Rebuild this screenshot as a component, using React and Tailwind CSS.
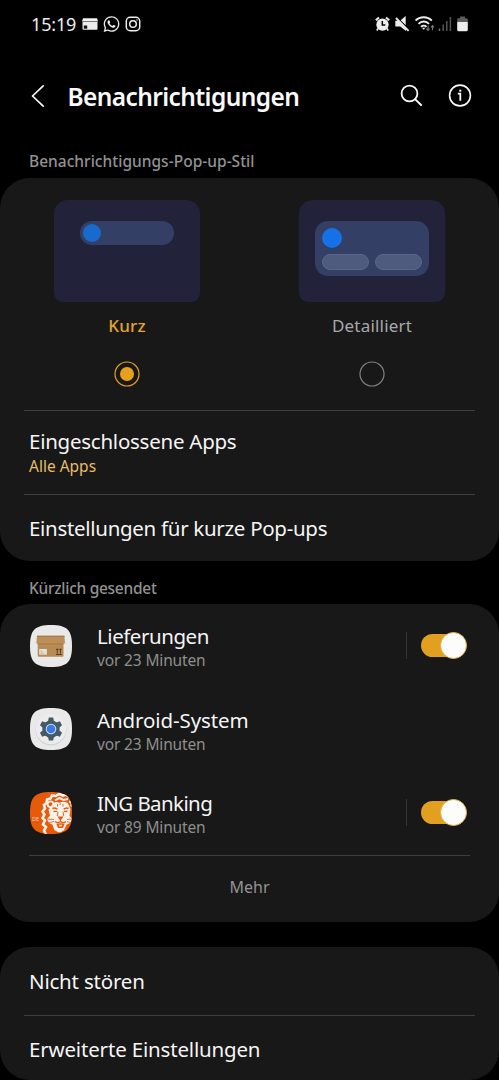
import React from 'react';
import { FaWhatsapp } from 'react-icons/fa';

function StatusBar() {
  return (
    <div className="flex h-12 shrink-0 items-center pl-[31px] pr-[31px] text-[#ededed]">
      <span className="text-[18px] leading-6 tracking-[-0.15px]">15:19</span>
      <svg className="ml-[6px] h-4 w-4" viewBox="0 0 16 16">
        <path d="M1 2.200h14l1 3.200H0z" fill="#f2f2f2" />
        <path d="M.5 6h15v6.800a1 1 0 0 1-1 1h-13a1 1 0 0 1-1-1z" fill="#ededed" />
        <path d="M1.800 9.500h3.400v3.200H1.800z" fill="#111" />
      </svg>
      <FaWhatsapp className="ml-[5px] h-[18px] w-[17px]" />
      <svg className="ml-[5px] h-4 w-4" viewBox="0 0 16 16" fill="none" stroke="currentColor" strokeWidth="1.500">
        <rect x="1.300" y="1.300" width="13.400" height="13.400" rx="3.800" />
        <circle cx="8" cy="8" r="3.300" />
        <circle cx="12" cy="4" r=".3" strokeWidth="1" />
      </svg>
      <div className="flex-1" />
      <svg className="h-4 w-[15px]" viewBox="0 0 15 16" fill="none">
        <path d="M.8 4.300 4 1.500M14.200 4.300 11 1.500" stroke="#ededed" strokeWidth="2" />
        <path d="M3 12.500 1.800 14.500M12 12.500l1.200 2" stroke="#ededed" strokeWidth="1.600" />
        <circle cx="7.500" cy="8.600" r="6.200" fill="#ededed" />
        <path d="M7.300 5v4h3" stroke="#000" strokeWidth="1.500" />
      </svg>
      <svg className="ml-[5px] h-4 w-[15px]" viewBox="0 0 15 16">
        <path d="M.3 4.700h3L11 13v2L5.300 10.500h-5z" fill="#ededed" />
        <path d="M5.300 4.400 10.700 0v9.500z" fill="#ededed" />
        <path d="M2 1.500 14.500 14" stroke="#000" strokeWidth="1.300" />
        <path d="M1 2 13.600 14.800" stroke="#ededed" strokeWidth="1.900" />
      </svg>
      <svg className="ml-[5px] h-4 w-[20px]" viewBox="0 0 20 16" fill="none">
        <path d="M.6 4.600c4.200-4.400 12-4.400 16.200 0M3.500 7.800c2.900-3 7.600-3 10.500 0" stroke="#ededed" strokeWidth="1.900" />
        <path d="M6 10.800c1.600-1.600 4-1.600 5.500 0" stroke="#ededed" strokeWidth="1.700" />
        <path d="m7 11.800 1.700 1.900 1.700-1.900z" fill="#ededed" />
        <path d="M13 9.800v4.500M11.500 12.700l1.500 1.800 1.500-1.800M17.500 14.300V9.500M16 11.300l1.500-1.800 1.500 1.800" stroke="#777" strokeWidth="1.100" />
      </svg>
      <svg className="ml-[3px] h-4 w-[14px]" viewBox="0 0 14 16" fill="none">
        <path d="M1.500 12.500V15" stroke="#777" strokeWidth="1.400" />
        <path d="M5.200 8.500V15M8.800 5V15M12.400 1V15" stroke="#555" strokeWidth="1.500" />
      </svg>
      <svg className="ml-[5px] h-4 w-[11px]" viewBox="0 0 11 16">
        <path d="M3 .6h5v1.700h1.500a1.300 1.300 0 0 1 1.300 1.300V6H.2V3.600a1.300 1.300 0 0 1 1.300-1.300H3z" fill="#5c5c5c" />
        <path d="M.2 6h10.600v7.700a1.500 1.500 0 0 1-1.500 1.500H1.700a1.500 1.500 0 0 1-1.500-1.500z" fill="#ededed" />
      </svg>
    </div>
  );
}

function Header() {
  return (
    <header className="flex h-24 shrink-0 items-center pl-[31px] pr-[27px] text-[#fafafa]">
      <svg className="h-6 w-[14px]" viewBox="0 0 14 24" fill="none" stroke="currentColor" strokeWidth="1.700" strokeLinecap="round" strokeLinejoin="round">
        <path d="M12.200 1.800 1.500 12 12.200 22.200" />
      </svg>
      <h1 className="ml-[22.500px] flex-1 whitespace-nowrap pt-px text-[24.500px] font-semibold leading-8 tracking-[-0.61px]">Benachrichtigungen</h1>
      <svg className="h-6 w-6" viewBox="0 0 24 24" fill="none" stroke="currentColor" strokeWidth="1.800" strokeLinecap="round">
        <circle cx="9.500" cy="9.500" r="7.900" />
        <path d="m15.300 15.400 5.800 5.600" strokeWidth="2" />
      </svg>
      <svg className="ml-6 h-6 w-6" viewBox="0 0 24 24" fill="none" stroke="currentColor" strokeWidth="1.600">
        <circle cx="12" cy="11.500" r="10.400" />
        <path d="M9.800 9.700h2.500v7" strokeWidth="1.800" />
        <path d="M11.300 6.700h2" strokeWidth="2" />
      </svg>
    </header>
  );
}

function Radio({ on }) {
  return (
    <svg className="mt-[23px] h-[26px] w-[26px]" viewBox="0 0 26 26" fill="none">
      <circle cx="13" cy="13" r="12" stroke={on ? '#e0a02b' : '#808080'} strokeWidth="1.200" />
      {on && <circle cx="13" cy="13" r="7" fill="#e6a01c" />}
    </svg>
  );
}

function StyleOption({ label, on, children }) {
  return (
    <div className="flex w-[146px] flex-col items-center">
      <div className="flex h-[102px] w-full flex-col items-center rounded-t-[14px] rounded-b-[9px] bg-[#22233a] pt-[21px]">{children}</div>
      <span className={on ? 'mt-3 text-[17px] font-medium leading-6 tracking-[0.2px] text-[#e4a42b]' : 'mt-3 text-[17px] leading-6 tracking-[0.2px] text-[#a8a8a8]'}>{label}</span>
      <Radio on={on} />
    </div>
  );
}

function Toggle() {
  return (
    <div className="flex items-center">
      <div className="h-[27px] w-px bg-[#343434]" />
      <div className="ml-[14px] flex h-[23px] w-[45px] items-center justify-end rounded-full bg-[#e39f1e]">
        <div className="-mr-px h-[27px] w-[27px] shrink-0 rounded-full border border-[#e3ad49] bg-[#fcfcfa]" />
      </div>
    </div>
  );
}

const SQUIRCLE = 'M21 0C37 0 42 5 42 21S37 42 21 42 0 37 0 21 5 0 21 0Z';

function ParcelIcon() {
  return (
    <svg className="h-[42px] w-[42px]" viewBox="0 0 42 42">
      <path d={SQUIRCLE} fill="#e9e9ea" />
      <path d="M7.700 18h25.800v12.500a1.200 1.200 0 0 1-1.200 1.200H8.900a1.200 1.200 0 0 1-1.200-1.200z" fill="#b88a56" />
      <path d="M7 10.800h27.400l.6 7.700H6.300z" fill="#bd8e59" />
      <path d="M7 10.800h27.400l.1 1.200H6.900z" fill="#a67c4e" />
      <path d="M7.700 18.500h25.800v.9H7.700z" fill="#a37645" />
      <path d="M9.200 24h7.700v5.700H9.200z" fill="#e3e0da" />
      <path d="M10.200 28.200h4M10.200 26.200h2.500" stroke="#aaa" strokeWidth=".7" />
      <path d="M26 29.500h5.800M27.300 28.500v-4.500M30.500 28.500v-4.500M26.300 25l1-1.300 1 1.300M29.500 25l1-1.300 1 1.300" stroke="#4d361f" strokeWidth=".9" fill="none" />
    </svg>
  );
}

function SystemIcon() {
  return (
    <svg className="h-[42px] w-[42px]" viewBox="0 0 42 42">
      <path d={SQUIRCLE} fill="#e9e9ea" />
      <circle cx="21" cy="21.800" r="15.500" fill="#cfcfd1" />
      <circle cx="21" cy="21" r="15.300" fill="#ececee" />
      <g fill="#455a64">
        <circle cx="21" cy="21" r="8.700" />
        <path d="M18.800 9.500h4.400l1 5h-6.400zM18.800 32.500h4.400l1-5h-6.400z" />
        <path d="M18.800 9.500h4.400l1 5h-6.400zM18.800 32.500h4.400l1-5h-6.400z" transform="rotate(60 21 21)" />
        <path d="M18.800 9.500h4.400l1 5h-6.400zM18.800 32.500h4.400l1-5h-6.400z" transform="rotate(120 21 21)" />
      </g>
      <circle cx="21" cy="21" r="5.300" fill="#c9dcf5" />
      <circle cx="21" cy="21" r="4.300" fill="#3b78e7" />
    </svg>
  );
}

function LionIcon() {
  return (
    <svg className="h-[42px] w-[42px]" viewBox="0 0 42 42">
      <clipPath id="tile"><path d={SQUIRCLE} /></clipPath>
      <g clipPath="url(#tile)">
        <path d="M0 0h42v42H0z" fill="#e65a0a" />
        <g fill="none" stroke="#f8f1e9">
          <path d="M40 5.500 36 2.500l-3 1-4-1.500-3 2-4-.5-1.500 3-3.500 1-.5 3.500-2.500 2 1 3.500-2.500 3 2 3-2 3.500 2.500 2.500-2 4 3 2.500-2 3.500 2 4" strokeWidth="2.600" strokeLinejoin="miter" />
          <path d="M25 8.500l4.500-2.500 4 2 4.500-1" strokeWidth="2" />
          <circle cx="20.500" cy="12.300" r="2.900" strokeWidth="1.800" />
          <path d="M39 9.500c2.500 0 3 3 2 5" strokeWidth="1.800" />
        </g>
        <path d="M23 11.500q3-2.500 6.500-.8 4-2 8.500.5l2.500 6-1 6.500 2.500 3-1.500 4-4 2-2.500 5.500-3.500 2h-2l-4-2-2-5.500-4-2-1.500-4 3-3-1.500-6z" fill="#f8f1e9" />
        <g fill="none" stroke="#e65a0a">
          <path d="M22.500 16.500q2.500-1.500 4.800.8M38.500 16.500q-2.500-1.500-4.800.8" strokeWidth="1.500" />
          <path d="M23.500 19.300h3.500M34 19.300h3.500" strokeWidth="1.300" />
          <path d="M27.500 12v2.500M33 12v2.500M30.200 11v2M28 19.500l-.7 4.500M33 19.500l.7 4.500" strokeWidth=".9" />
          <path d="M17 27l7 .5M17.500 31l6.500-1.500M42 27l-5 .5M42 31l-5-1.500" strokeWidth=".8" />
          <path d="M30.500 26v3.500M30.500 29.500q-3 2.500-5.500 0M30.500 29.500q3 2.500 5.500 0" strokeWidth="1.200" />
        </g>
        <path d="M27.500 24.500h6l-1.800 3h-2.400zM26.500 32q4-1.500 8 0l-1.500 4h-5z" fill="#e65a0a" />
        <path d="M28.700 32.800h3.600l-.8 1.700h-2z" fill="#f8f1e9" />
        <text x="2" y="29" fontSize="5.500" fontFamily="Noto Sans, sans-serif" fill="#f7d5bd">DE</text>
      </g>
    </svg>
  );
}

function AppRow({ icon, name, nameClass, time, toggle }) {
  return (
    <div className="flex h-[83.500px] items-center pl-[30px] pr-[33px]">
      {icon}
      <div className="ml-[25px] flex-1">
        <div className={nameClass}>{name}</div>
        <div className="text-[15.500px] leading-5 tracking-[-0.15px] text-[#8e8e8e]">{time}</div>
      </div>
      {toggle && <Toggle />}
    </div>
  );
}

export default function App() {
  return (
    <div className="flex h-[1080px] w-full flex-col overflow-hidden bg-black font-['Noto_Sans',sans-serif] text-[#f5f5f5]">
      <StatusBar />
      <Header />
      <h2 className="flex h-[34px] shrink-0 items-center pl-[29px] pt-[2px] text-[15.500px] font-medium tracking-[0.02px] text-[#929292]">Benachrichtigungs-Pop-up-Stil</h2>

      <section className="flex h-[383px] shrink-0 flex-col rounded-[30px] bg-[#181818] pt-[22px]">
        <div className="flex h-[210px] justify-between pl-[54px] pr-[54px]">
          <StyleOption label="Kurz" on>
            <div className="flex h-6 w-[94px] items-center rounded-full bg-[#343f66] pl-[3px]">
              <div className="h-[18px] w-[18px] rounded-full bg-[#186bcb]" />
            </div>
          </StyleOption>
          <StyleOption label="Detailliert">
            <div className="flex h-[55px] w-[114px] flex-col rounded-[13px] bg-[#343f66] px-[7px] pt-[7px]">
              <div className="h-5 w-5 rounded-full bg-[#1571e6]" />
              <div className="mt-[6px] flex justify-between">
                <div className="h-4 w-[47px] rounded-full border border-[#5b6789] bg-[#4f5b7e]" />
                <div className="h-4 w-[47px] rounded-full border border-[#5b6789] bg-[#4f5b7e]" />
              </div>
            </div>
          </StyleOption>
        </div>
        <hr className="mx-6 border-[#3e3e3e]" />
        <div className="flex h-[82.500px] flex-col pl-[29px] pt-4">
          <span className="text-[20.500px] leading-7 tracking-[-0.25px]">Eingeschlossene Apps</span>
          <span className="mt-px text-[15.500px] leading-5 text-[#e6bd69]">Alle Apps</span>
        </div>
        <hr className="mx-6 border-[#3e3e3e]" />
        <div className="flex flex-1 items-center pl-[29px] pt-px text-[20.500px] tracking-[-0.3px]">Einstellungen für kurze Pop-ups</div>
      </section>

      <h2 className="flex h-[43px] shrink-0 items-center pl-[29px] pt-[13px] text-[15.500px] font-medium tracking-[-0.28px] text-[#929292]">Kürzlich gesendet</h2>

      <section className="flex h-[318px] shrink-0 flex-col rounded-[30px] bg-[#181818]">
        <AppRow icon={<ParcelIcon />} name="Lieferungen" nameClass="pt-px text-[20.500px] leading-7 tracking-[-0.45px]" time="vor 23 Minuten" toggle />
        <AppRow icon={<SystemIcon />} name="Android-System" nameClass="pt-px text-[20.500px] leading-7 tracking-[-0.1px]" time="vor 23 Minuten" />
        <AppRow icon={<LionIcon />} name="ING Banking" nameClass="pt-px text-[20.500px] leading-7 tracking-[-0.6px]" time="vor 89 Minuten" toggle />
        <hr className="mx-[29px] border-[#3e3e3e]" />
        <div className="flex h-[62px] items-center justify-center text-[16px] text-[#929292]">Mehr</div>
      </section>

      <section className="mt-[25px] flex h-[133px] shrink-0 flex-col rounded-[30px] bg-[#181818]">
        <div className="flex h-[68px] shrink-0 items-center pl-[29px] pt-px text-[20.500px] tracking-[-0.2px]">Nicht stören</div>
        <hr className="mx-6 shrink-0 border-[#3e3e3e]" />
        <div className="flex flex-1 items-center pl-[29px] pt-[3px] text-[20.500px] tracking-[-0.17px]">Erweiterte Einstellungen</div>
      </section>
    </div>
  );
}
